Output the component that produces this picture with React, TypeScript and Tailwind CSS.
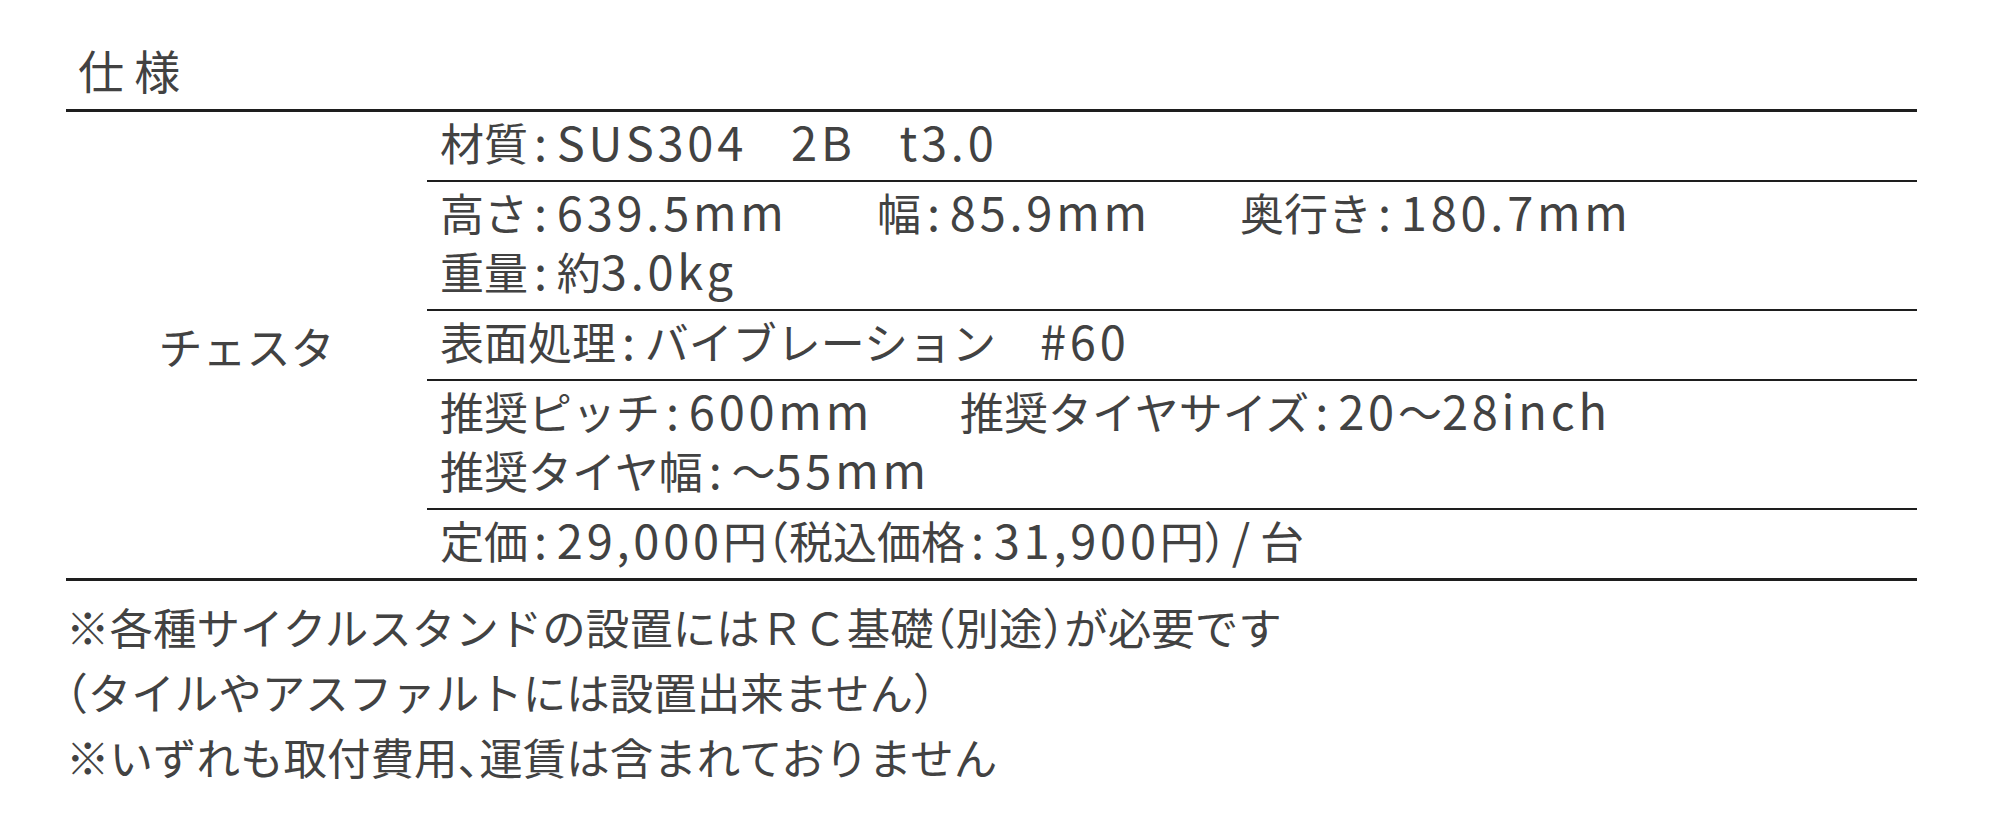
import React from "react";

// ASCII runs are set a bit larger with tracking so digits/latin match the spec sheet;
// ":" and "/" get some air on both sides
function Txt({ s }: { s: string }) {
    return (
        <>
            {s.split(/([!-~]+)/).map((p, i) =>
                i % 2 ? (
                    <span key={i} className="text-[47px] leading-none tracking-[0.08em]">
                        {p.split(/([:/])/).map((q, j) =>
                            j % 2 ? (
                                <span key={j} className="mx-[6px]">
                                    {q}
                                </span>
                            ) : (
                                q
                            )
                        )}
                    </span>
                ) : (
                    p
                )
            )}
        </>
    );
}

const rows: string[][][] = [
    [["材質:SUS304　2B　t3.0"]],
    [["高さ:639.5mm", "幅:85.9mm", "奥行き:180.7mm"], ["重量:約3.0kg"]],
    [["表面処理:バイブレーション　#60"]],
    [["推奨ピッチ:600mm", "推奨タイヤサイズ:20～28inch"], ["推奨タイヤ幅:～55mm"]],
    [["定価:29,000円（税込価格:31,900円）/台"]],
];

const widths: string[][] = [[], ["w-[437px]", "w-[363px]"], [], ["w-[520px]"], []];

export default function App() {
    return (
        <div className="min-h-[834px] w-[1998px] bg-white font-['Noto_Sans_CJK_JP',sans-serif] text-[#424242] [font-feature-settings:'halt']">
            <div className="ml-[66px] w-[1851px] pt-[40px]">
                <div className="pl-[12px] text-[46px] leading-[59px] mb-[10px]">仕 様</div>
                <div className="flex border-y-[3px] border-[#1e1e1e] text-[44px] leading-[59px]">
                    <div className="w-[361px] flex items-center justify-center pt-[2px]">チェスタ</div>
                    <div className="flex-1">
                        {rows.map((lines, r) => (
                            <div
                                key={r}
                                className={
                                    "pl-[13px] pt-[1px] pb-[8px] " +
                                    (r < rows.length - 1 ? "border-b-2 border-[#1e1e1e]" : "")
                                }
                            >
                                {lines.map((items, l) => (
                                    <div key={l} className="flex h-[59px] whitespace-nowrap">
                                        {items.map((it, k) => (
                                            <div key={k} className={widths[r][k] ?? ""}>
                                                <Txt s={it} />
                                            </div>
                                        ))}
                                    </div>
                                ))}
                            </div>
                        ))}
                    </div>
                </div>
                <div className="mt-[13px] text-[43.5px] leading-[65px]">
                    <p>※各種サイクルスタンドの設置にはＲＣ基礎（別途）が必要です</p>
                    <p>（タイルやアスファルトには設置出来ません）</p>
                    <p>※いずれも取付費用、運賃は含まれておりません</p>
                </div>
            </div>
        </div>
    );
}
